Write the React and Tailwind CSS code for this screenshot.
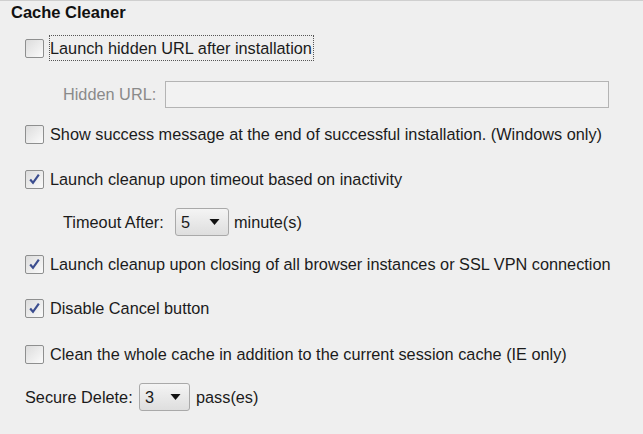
const font = { fontFamily: '"Liberation Sans", Arial, sans-serif' };

function Check({ checked }) {
    return (
        <span className="flex h-[19px] w-[19px] shrink-0 items-center justify-center rounded-[2px] border border-[#8e8f8f] bg-gradient-to-br from-[#dcdcdc] to-[#fbfbfb] p-[2px]">
            {checked && (
                <svg viewBox="0 0 12 12" className="h-[14px] w-[14px]">
                    <path d="M2 6.5 L4.6 9.5 L10 2" fill="none" stroke="#3b4d8f" strokeWidth="2" />
                </svg>
            )}
        </span>
    );
}

function Dropdown({ value, width }) {
    return (
        <span
            className={`inline-flex h-[28px] items-center justify-between rounded-[3px] border border-[#a9a9a9] bg-gradient-to-b from-[#f4f4f4] to-[#dedede] pl-[5px] pr-[8px] ${width}`}
        >
            <span>{value}</span>
            <svg viewBox="0 0 10 6" className="h-[6px] w-[11px]">
                <path d="M0 0 H10 L5 6 Z" fill="#111" />
            </svg>
        </span>
    );
}

function Option({ checked, label, focused }) {
    return (
        <div className="flex h-[20px] items-center gap-[6px] pl-[25px]">
            <Check checked={checked} />
            <span className={focused ? 'outline outline-1 outline-dotted outline-[#555] pr-[1px]' : ''}>{label}</span>
        </div>
    );
}

export default function App() {
    return (
        <div className="h-[434px] w-[643px] overflow-hidden border-t border-[#cfcfcf] bg-[#efefef] text-[16.3px] text-[#1b1b1b]" style={font}>
            <div className="pl-[11px] pt-[1px] text-[16.5px] font-bold leading-[20px] text-[#111]">Cache Cleaner</div>

            <div className="mt-[16px]">
                <Option label="Launch hidden URL after installation" focused />
            </div>

            <div className="mt-[23px] flex items-center pl-[63px]">
                <span className="w-[102px] text-[#8a8a8a]">Hidden URL:</span>
                <span className="h-[27px] w-[444px] border border-[#b4b4b4] bg-[#f2f2f2]" />
            </div>

            <div className="mt-[16px]">
                <Option label="Show success message at the end of successful installation. (Windows only)" />
            </div>

            <div className="mt-[25px]">
                <Option checked label="Launch cleanup upon timeout based on inactivity" />
            </div>

            <div className="mt-[19px] flex items-center gap-[5px] pl-[63px]">
                <span className="w-[107px]">Timeout After:</span>
                <Dropdown value="5" width="w-[54px]" />
                <span>minute(s)</span>
            </div>

            <div className="mt-[18px]">
                <Option checked label="Launch cleanup upon closing of all browser instances or SSL VPN connection" />
            </div>

            <div className="mt-[24px]">
                <Option checked label="Disable Cancel button" />
            </div>

            <div className="mt-[26px]">
                <Option label="Clean the whole cache in addition to the current session cache (IE only)" />
            </div>

            <div className="mt-[19px] flex items-center gap-[6px] pl-[25px]">
                <span className="w-[108px]">Secure Delete:</span>
                <Dropdown value="3" width="w-[51px]" />
                <span>pass(es)</span>
            </div>
        </div>
    );
}
